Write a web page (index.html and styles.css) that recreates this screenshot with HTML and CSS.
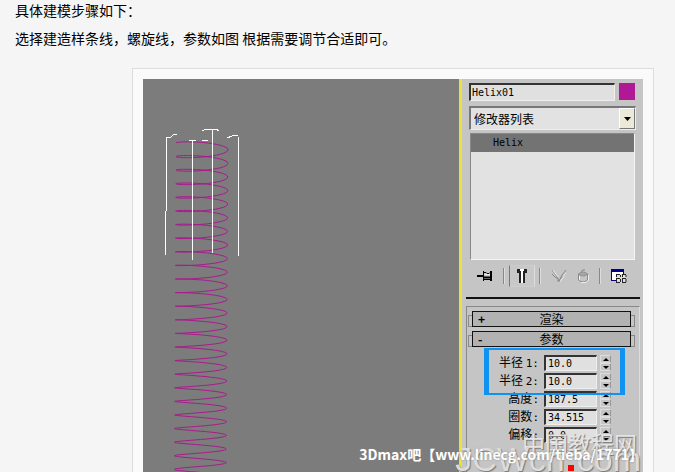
FILE: index.html
```html
<!DOCTYPE html>
<html lang="zh-CN">
<head>
    <meta charset="UTF-8">
    <meta name="viewport" content="width=device-width, initial-scale=1.0">
    <title>螺旋线建模</title>
    <link rel="stylesheet" href="styles.css">
</head>
<body>

    <div class="article">
        <p>具体建模步骤如下：</p>
        <p>选择建造样条线，螺旋线，参数如图 根据需要调节合适即可。</p>
    </div>

    <div class="figure">
        <div class="scene">
            <div class="viewport">
                <svg class="drawing" width="316" height="393" fill="none">
                    <path id="helix" stroke="#a81b8c"/>
                    <g stroke="#fff" shape-rendering="crispEdges">
                        <path d="M23.5 58V130L22.5 134V176M23 58L28 58L30 56L34 55"/>
                        <path d="M49.5 62V181M46 61H53M59 61H65"/>
                        <path d="M69.5 50V174M59 52L63 50L73 50L76 52"/>
                        <path d="M95.5 58V177M84 59L89 57L95 56"/>
                    </g>
                </svg>
            </div>

            <form class="panel">
                <div class="name-row">
                    <input class="name" type="text" value="Helix01" aria-label="名称">
                    <button class="swatch" type="button" aria-label="颜色"></button>
                </div>

                <div class="dropdown">
                    <select aria-label="修改器">
                        <option>修改器列表</option>
                    </select>
                    <span class="arrow"><svg width="7" height="4"><path d="M0 0H7L3.5 4Z"/></svg></span>
                </div>

                <ul class="stack">
                    <li>Helix</li>
                </ul>

                <div class="tools">
                    <button type="button" aria-label="锁定堆栈">
                        <svg width="16" height="12" fill="none" stroke="#000">
                            <path d="M0 6H6" stroke-width="2"/>
                            <path d="M6.5 1V11M7 2.5H9L10 3.5H12L13 2.5M7 9.5H13M14.5 1V11M13.5 1V11"/>
                            <path d="M7 7.5H13" stroke-width="2"/>
                            <path d="M7.5 4.5H13" stroke="#eee"/>
                        </svg>
                    </button>
                    <i></i>
                    <button class="pressed" type="button" aria-label="显示最终结果">
                        <svg width="10" height="14">
                            <path d="M0 0H3V2H4V14H2V4H0ZM10 0H7V2H6V14H8V4H10Z" fill="#222"/>
                            <path d="M3 0H7V2H6V14H4V2H3Z" fill="#fff"/>
                        </svg>
                    </button>
                    <i></i>
                    <button type="button" aria-label="使唯一">
                        <svg width="16" height="14" fill="none" stroke="#888">
                            <path d="M1 1L5 6L8 12L11 6L15 1M1 5L4 8L7 10M15 5L12 8L9 10M6 12H10"/>
                            <path d="M2 1L7 8M9 13L15 4" stroke="#eee"/>
                        </svg>
                    </button>
                    <button type="button" aria-label="移除修改器">
                        <svg width="12" height="14" fill="none" stroke="#888">
                            <path d="M1.5 5V11Q6 15 10.5 11V5M1.5 5Q6 1 10.5 5Q6 9 1.5 5M3 5H9M4.5 3L5.5 1H8"/>
                            <path d="M11.5 6V11L9 13.5H4M2.5 7V11" stroke="#eee"/>
                        </svg>
                    </button>
                    <i></i>
                    <button type="button" aria-label="配置修改器集">
                        <svg width="16" height="14">
                            <path d="M0 0H13V12H0Z" fill="#00008b"/>
                            <path d="M1 3H12V11H1Z" fill="#fff"/>
                            <path d="M5 5H15V14H5Z" fill="#ddd"/>
                            <path d="M5 5.5H9M11 5.5H15M5 9.5H9M11 9.5H15M5 13.5H9M11 13.5H15M5.5 6V8M9.5 6V8M11.5 6V8M15 6V8M5.5 10V13M9.5 10V13M11.5 10V13M15 10V13" stroke="#222"/>
                        </svg>
                    </button>
                </div>

                <div class="rollouts">
                    <button class="rollout" type="button"><b>+</b>渲染</button>
                    <button class="rollout" type="button"><b>-</b>参数</button>

                    <div class="params">
                        <div class="row">
                            <label for="r1">半径 <span>1:</span></label>
                            <input id="r1" type="text" value="10.0">
                            <div class="spin"><button type="button" aria-label="增加"></button><button type="button" aria-label="减少"></button></div>
                        </div>
                        <div class="row">
                            <label for="r2">半径 <span>2:</span></label>
                            <input id="r2" type="text" value="10.0">
                            <div class="spin"><button type="button" aria-label="增加"></button><button type="button" aria-label="减少"></button></div>
                        </div>
                        <div class="row">
                            <label for="height">高度<span>:</span></label>
                            <input id="height" type="text" value="187.5">
                            <div class="spin"><button type="button" aria-label="增加"></button><button type="button" aria-label="减少"></button></div>
                        </div>
                        <div class="row">
                            <label for="turns">圈数<span>:</span></label>
                            <input id="turns" type="text" value="34.515">
                            <div class="spin"><button type="button" aria-label="增加"></button><button type="button" aria-label="减少"></button></div>
                        </div>
                        <div class="row">
                            <label for="bias">偏移<span>:</span></label>
                            <input id="bias" type="text" value="0.0">
                            <div class="spin"><button type="button" aria-label="增加"></button><button type="button" aria-label="减少"></button></div>
                        </div>
                        <div class="highlight"></div>
                    </div>
                </div>
            </form>

            <div class="mark site">中国教程网</div>
            <div class="mark domain">JCWcn<span></span>com</div>
            <div class="mark credit">3Dmax吧【www.linecg.com/tieba/1771】</div>
        </div>
    </div>

    <script>
        const helix = document.getElementById('helix');
        const pitch = 13.6;
        const turns = 25;
        const steps = 32;
        let d = '';

        // the rings look flatter the further down they are
        for (let i = 0; i <= turns * steps; i++) {
            const turn = i / steps;
            const angle = turn * Math.PI * 2;
            const x = 59 - turn * 0.07 - 26 * Math.cos(angle);
            const y = 64 + turn * pitch - (4 - turn * 0.15) * Math.sin(angle);
            d += (i ? 'L' : 'M') + x.toFixed(1) + ' ' + y.toFixed(1);
        }
        helix.setAttribute('d', d);
    </script>

</body>
</html>
```

FILE: styles.css
```css
* {
    margin: 0;
    padding: 0;
    box-sizing: border-box;
}

body {
    font-family: "Noto Sans CJK SC", sans-serif;
    background-color: #f5f5f5;
    color: #000;
    display: flex;
    flex-direction: column;
    height: 100vh;
    overflow: hidden;
}

button {
    border: none;
    background: none;
    font-family: inherit;
}

.article {
    padding: 0 15px 16px;
    font-size: 14px;
    line-height: 28px;
    margin-top: -4px;
}

.figure {
    flex: 1;
    min-height: 0;
    margin: 0 21px 0 132px;
    padding: 10px 10px 0;
    border: 1px solid #ddd;
    border-bottom: none;
    background-color: #fafafa;
}

.scene {
    position: relative;
    display: flex;
    height: 100%;
    overflow: hidden;
}

.viewport {
    flex: 1;
    background-color: #7c7c7c;
    overflow: hidden;
}

.drawing {
    display: block;
}

.panel {
    width: 184px;
    padding: 4px 3px 0 4px;
    border-left: 3px solid #e8e337;
    background-color: #c5c5c5;
    font-size: 12px;
}

.panel input {
    border: 1px solid #eee;
    border-top: 2px solid #333;
    border-left: 2px solid #333;
    border-radius: 0;
    background-color: #e0e0e0;
    font-family: "DejaVu Sans Mono", monospace;
    font-size: 10px;
    color: #000;
}

.name-row {
    display: flex;
    gap: 4px;
    padding: 0 5px 0 3px;
}

.panel .name {
    flex: 1;
    min-width: 0;
    height: 18px;
    padding-left: 1px;
}

.swatch {
    width: 16px;
    height: 17px;
    background-color: #b01896;
}

.dropdown {
    position: relative;
    height: 24px;
    margin: 5px 4px 3px 3px;
    border: 1px solid #eee;
    border-top: 2px solid #777;
    border-left: 2px solid #777;
    background-color: #e2e2e2;
}

.dropdown select {
    display: block;
    width: 100%;
    height: 20px;
    padding-left: 3px;
    border: none;
    background: none;
    appearance: none;
    font-family: inherit;
    font-size: 12px;
    color: #000;
}

.arrow {
    position: absolute;
    top: 0;
    right: 0;
    bottom: 0;
    width: 16px;
    display: flex;
    align-items: center;
    justify-content: center;
    border: 1px solid #fff;
    border-right-color: #777;
    border-bottom-color: #777;
    background-color: #ece9d8;
    pointer-events: none;
}

.stack {
    height: 127px;
    margin: 0 5px 0 4px;
    border: 1px solid #f4f4f4;
    border-top: 1px solid #888;
    border-left: 1px solid #888;
    background-color: #e2e2e2;
    list-style: none;
}

.stack li {
    padding-left: 22px;
    background-color: #737373;
    font-family: "DejaVu Sans Mono", monospace;
    font-size: 10px;
    line-height: 18px;
}

.tools {
    display: flex;
    align-items: center;
    gap: 10px;
    height: 31px;
    padding-left: 11px;
}

.tools button {
    display: flex;
}

.tools .pressed {
    margin: 0 -6px;
    padding: 3px 7px;
    border: 1px solid #ccc;
    border-left-color: #777;
    border-right-color: #ddd;
    background-color: #c8c8c8;
}

.tools i {
    width: 2px;
    height: 16px;
    border-left: 1px solid #888;
    border-right: 1px solid #ddd;
}

.rollouts {
    position: relative;
    margin-top: 6px;
    padding: 12px 9px 0 6px;
    border-top: 2px solid #111;
}

.rollouts::before {
    content: "";
    position: absolute;
    top: 7px;
    right: 0;
    bottom: -60px;
    left: 0;
    border: 1px solid #888;
    border-right-color: #ddd;
}

.rollout {
    position: relative;
    display: block;
    width: 100%;
    height: 16px;
    margin-bottom: 4px;
    border: 1px solid #111;
    background-color: #b2b2b2;
    font-size: 12px;
    line-height: 14px;
    color: #000;
}

.rollout::before,
.rollout::after {
    content: "";
    position: absolute;
    top: 3px;
    width: 3px;
    height: 10px;
    border: 1px solid #888;
}

.rollout::before {
    left: -5px;
    border-right: none;
}

.rollout::after {
    right: -5px;
    border-left: none;
}

.rollout b {
    position: absolute;
    left: 5px;
}

.params {
    position: relative;
    display: flex;
    flex-direction: column;
    gap: 2px;
    padding: 4px 20px 0 8px;
}

.row {
    display: flex;
    justify-content: flex-end;
    align-items: center;
    height: 16px;
    line-height: 16px;
}

.row label {
    margin-right: 5px;
    white-space: nowrap;
}

.row label span {
    font-family: "DejaVu Sans Mono", monospace;
    font-size: 11px;
}

.panel .row input {
    width: 53px;
    height: 16px;
    padding-left: 2px;
}

.spin {
    display: flex;
    flex-direction: column;
    width: 11px;
    margin-left: 3px;
}

.spin button {
    display: flex;
    justify-content: center;
    align-items: center;
    height: 8px;
    border: 1px solid #ddd;
    border-right-color: #999;
}

.spin button::before {
    content: "";
    border: 3px solid transparent;
    border-top: none;
    border-bottom-color: #000;
}

.spin button:last-child::before {
    border: 3px solid transparent;
    border-bottom: none;
    border-top-color: #000;
}

.highlight {
    position: absolute;
    top: -3px;
    right: 6px;
    left: 12px;
    height: 47px;
    border: 2px solid #1092f0;
    border-right-width: 5px;
    border-left-width: 5px;
    pointer-events: none;
}

.mark {
    position: absolute;
    white-space: nowrap;
    color: #fff;
}

.site {
    right: 6px;
    bottom: 14px;
    font-size: 23px;
    line-height: 30px;
    color: #e4e4e4;
    text-shadow: 1px 1px 1px #777;
}

.domain {
    right: 2px;
    bottom: -4px;
    font-family: "Liberation Sans", sans-serif;
    font-size: 34px;
    line-height: 34px;
    color: #dcdcdc;
    text-shadow: 1px 1px 1px #777;
}

.domain span {
    display: inline-block;
    width: 6px;
    height: 6px;
    margin: 0 3px;
    background-color: #f00;
}

.credit {
    right: 0;
    bottom: 8px;
    font-size: 14px;
    font-weight: bold;
    line-height: 20px;
    text-shadow: 0 0 2px #888;
}
```
